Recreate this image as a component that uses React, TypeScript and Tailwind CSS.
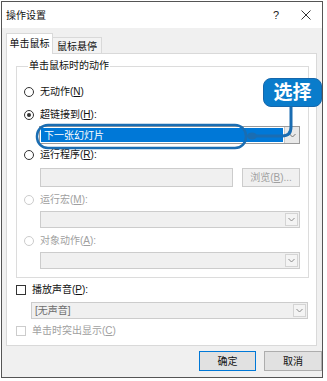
import React from 'react'

const font = "font-['Liberation_Sans','Noto_Sans_CJK_SC',sans-serif]"

function Key({ k }: { k: string }) {
  return <span className="underline underline-offset-[1px]">{k}</span>
}

function Radio({ checked = false, disabled = false }: { checked?: boolean; disabled?: boolean }) {
  return (
    <span
      className={
        'flex h-[10px] w-[10px] shrink-0 items-center justify-center rounded-full border bg-white ' +
        (disabled ? 'border-[#cccccc]' : 'border-[#333333]')
      }
    >
      {checked && <span className="h-[4px] w-[4px] rounded-full bg-[#333333]" />}
    </span>
  )
}

function Check({ disabled = false }: { disabled?: boolean }) {
  return (
    <span
      className={
        'block h-[10px] w-[10px] shrink-0 border bg-white ' +
        (disabled ? 'border-[#cccccc]' : 'border-[#333333]')
      }
    />
  )
}

function Chevron({ color = '#777777' }: { color?: string }) {
  return (
    <svg width="7" height="5" viewBox="0 0 7 5">
      <path d="M0.5 1 L3.5 4 L6.5 1" fill="none" stroke={color} strokeWidth="1" />
    </svg>
  )
}

function Combo({
  text,
  className = '',
}: {
  text?: string
  className?: string
}) {
  return (
    <div className={'flex border border-[#cccccc] bg-[#f0f0f0] ' + className}>
      <div className="flex flex-1 items-center pl-[3px] text-[10px] text-[#6d6d6d]">{text}</div>
      <div className="m-[1px] flex w-[13px] items-center justify-center border border-[#d4d4d4] bg-[#f4f4f4]">
        <Chevron color="#8a8a8a" />
      </div>
    </div>
  )
}

function Row({
  children,
  disabled = false,
  className = '',
}: {
  children: React.ReactNode
  disabled?: boolean
  className?: string
}) {
  return (
    <div
      className={
        'flex h-[16px] items-center gap-[6px] text-[10px] leading-[16px] ' +
        (disabled ? 'text-[#a0a0a0] ' : 'text-[#111111] ') +
        className
      }
    >
      {children}
    </div>
  )
}

export default function App() {
  return (
    <div className={'relative h-[381px] w-[327px] overflow-hidden bg-white pl-[1px] pt-[1px] ' + font}>
      <div className="flex h-[377px] w-[322px] flex-col border border-[#555555]">
        {/* title bar */}
        <div className="flex h-[26px] items-center bg-white pl-[4px]">
          <span className="text-[10px] text-[#111111]">操作设置</span>
          <span className="ml-auto mr-[22px] text-[11px] text-[#222222]">?</span>
          <svg width="10" height="10" viewBox="0 0 10 10" className="mr-[11px]">
            <path d="M0.5 0.5 L9.5 9.5 M9.5 0.5 L0.5 9.5" stroke="#333333" strokeWidth="1" />
          </svg>
        </div>

        {/* body */}
        <div className="flex flex-1 flex-col bg-[#f0f0f0] pl-[4px] pr-[4px] pt-[5px]">
          <div className="flex h-[20px] items-end">
            <div className="relative z-10 -mb-[1px] flex h-[21px] w-[47px] items-center justify-center border border-b-0 border-[#d9d9d9] bg-white pb-[1px] text-[10px] text-[#111111]">
              单击鼠标
            </div>
            <div className="flex h-[16px] w-[49px] items-center justify-center border border-b-0 border-l-0 border-[#d9d9d9] bg-[#f3f3f3] pt-[1px] text-[10px] text-[#111111]">
              鼠标悬停
            </div>
          </div>

          <div className="flex h-[293px] w-[311px] flex-col border border-[#d9d9d9] bg-white">
            <fieldset className="ml-[9px] mt-[6px] w-[292px] border border-[#dcdcdc] pb-[8px] pl-[7px] pr-[8px]">
              <legend className="ml-[4px] px-[1px] text-[10px] leading-[12px] text-[#111111]">单击鼠标时的动作</legend>

              <Row className="mt-[12px]">
                <Radio />
                <span>
                  无动作(<Key k="N" />)
                </span>
              </Row>
              <Row className="mt-[7px]">
                <Radio checked />
                <span>
                  超链接到(<Key k="H" />):
                </span>
              </Row>
              <div className="ml-[15px] mt-[3px] flex h-[18px] border border-[#9a9a9a] bg-white">
                <div className="m-[1px] flex flex-1 items-center bg-[#0078d7] pl-[3px] text-[10px] text-white">
                  下一张幻灯片
                </div>
                <div className="flex w-[15px] items-center justify-center border-l border-[#c8c8c8] bg-[#e9e9e9]">
                  <Chevron />
                </div>
              </div>

              <Row className="mt-[3px]">
                <Radio />
                <span>
                  运行程序(<Key k="R" />):
                </span>
              </Row>
              <div className="ml-[16px] mt-[5px] flex h-[19px] gap-[9px]">
                <div className="w-[193px] border border-[#cccccc] bg-[#f0f0f0]" />
                <div className="flex w-[58px] items-center justify-center border border-[#cccccc] bg-[#f0f0f0] text-[10px] text-[#a0a0a0]">
                  浏览(<Key k="B" />)...
                </div>
              </div>

              <Row disabled className="mt-[5px]">
                <Radio disabled />
                <span>
                  运行宏(<Key k="M" />):
                </span>
              </Row>
              <Combo className="ml-[16px] mt-[3px] h-[17px]" />

              <Row disabled className="mt-[5px]">
                <Radio disabled />
                <span>
                  对象动作(<Key k="A" />):
                </span>
              </Row>
              <Combo className="ml-[16px] mt-[3px] h-[17px]" />
            </fieldset>

            <Row className="ml-[9px] mt-[4px]">
              <Check />
              <span>
                播放声音(<Key k="P" />):
              </span>
            </Row>
            <Combo text="[无声音]" className="ml-[24px] mt-[4px] h-[17px] w-[277px]" />
            <Row disabled className="ml-[9px] mt-[4px]">
              <Check disabled />
              <span>
                单击时突出显示(<Key k="C" />)
              </span>
            </Row>
          </div>

          <div className="mt-[5px] flex h-[20px] w-[316px] justify-end gap-[8px]">
            <div className="flex w-[57px] items-center justify-center border border-[#0078d7] bg-[#e1e1e1] text-[10px] text-[#111111]">
              确定
            </div>
            <div className="flex w-[58px] items-center justify-center border border-[#adadad] bg-[#e1e1e1] text-[10px] text-[#111111]">
              取消
            </div>
          </div>
        </div>
      </div>

      {/* annotation callout */}
      <svg className="pointer-events-none absolute left-0 top-0" width="327" height="381">
        <rect x="37" y="125" width="209" height="23" rx="11" fill="none" stroke="#1a6db2" strokeWidth="2.5" />
        <path d="M291 105 L291 127 Q291 136 282 136 L254 136" fill="none" stroke="#1a6db2" strokeWidth="3" />
        <ellipse cx="252" cy="136" rx="5" ry="3.5" fill="#1a6db2" />
      </svg>
      <div className="absolute left-[263px] top-[78px] flex h-[29px] w-[59px] items-center justify-center rounded-[8px] border border-[#1667ab] bg-[#0a7ccb] text-[19px] font-bold leading-none text-white">
        选择
      </div>
    </div>
  )
}
